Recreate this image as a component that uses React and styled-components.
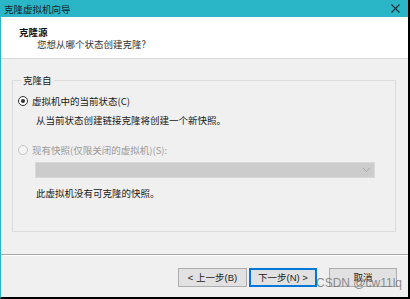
import React from "react";
import styled, { createGlobalStyle } from "styled-components";

const Global = createGlobalStyle`
  html, body { margin: 0; padding: 0; background: #ffffff; }
  body { font-family: "Liberation Sans", "Noto Sans CJK SC", sans-serif; }
  * { box-sizing: border-box; }
`;

const Frame = styled.div`
  position: relative;
  width: 410px;
  height: 299px;
  display: flex;
  flex-direction: column;
  border-left: 1px solid #2bb6c8;
  border-right: 2px solid #000;
  border-bottom: 2px solid #000;
  background: #f0f0f0;
  font-size: 9.5px;
  color: #1a1a1a;
  overflow: hidden;
`;

const TitleBar = styled.div`
  height: 17px;
  flex: none;
  background: #2bb6c8;
  display: flex;
  align-items: center;
  justify-content: space-between;
  padding: 0 8px 0 3px;
  font-family: "Noto Sans CJK SC", sans-serif;
  font-size: 9.5px;
  color: #10262a;
`;

const Header = styled.div`
  height: 42px;
  flex: none;
  background: #ffffff;
  border-bottom: 1px solid #d8d8d8;
  padding: 9px 0 0 18px;
  font-family: "Noto Sans CJK SC", sans-serif;
`;

const HeadTitle = styled.div`
  font-weight: bold;
  line-height: 12px;
  color: #111;
`;

const HeadSub = styled.div`
  line-height: 12px;
  padding-left: 18px;
  color: #333;
`;

const Body = styled.div`
  flex: 1;
  padding: 15px 12px 0 11px;
`;

const Group = styled.fieldset`
  margin: 0;
  padding: 0 0 31px 5px;
  border: 1px solid #dcdcdc;
  min-width: 0;
`;

const Legend = styled.legend`
  margin-left: 3px;
  padding: 0 2px;
  line-height: 12px;
  font-family: "Noto Sans CJK SC", sans-serif;
  color: #1a1a1a;
`;

const Row = styled.div`
  display: flex;
  align-items: center;
  gap: 4px;
  height: 14px;
  margin-top: ${(p) => p.$mt}px;
  font-family: "Noto Sans CJK SC", sans-serif;
  color: ${(p) => (p.$disabled ? "#9a9a9a" : "#1a1a1a")};
`;

const Radio = styled.span`
  width: 10px;
  height: 10px;
  flex: none;
  border-radius: 50%;
  border: 1px solid ${(p) => (p.$disabled ? "#c4c4c4" : "#333")};
  background: ${(p) => (p.$disabled ? "#f4f4f4" : "#fff")};
  display: flex;
  align-items: center;
  justify-content: center;
  &::after {
    content: "";
    width: 4px;
    height: 4px;
    border-radius: 50%;
    background: ${(p) => (p.$checked ? "#333" : "transparent")};
  }
`;

const Note = styled.div`
  margin-top: ${(p) => p.$mt}px;
  margin-left: 18px;
  line-height: 14px;
  font-family: "Noto Sans CJK SC", sans-serif;
  color: #1a1a1a;
`;

const Combo = styled.div`
  margin: 5px 0 0 17px;
  width: 340px;
  height: 16px;
  background: #cccccc;
  border: 1px solid #d9d9d9;
  display: flex;
  align-items: center;
  justify-content: flex-end;
  padding-right: 3px;
`;

const Footer = styled.div`
  height: 43px;
  flex: none;
  border-top: 1px solid #a8a8a8;
  box-shadow: inset 0 1px 0 #ffffff;
  display: flex;
  justify-content: flex-end;
  align-items: flex-start;
  padding: 13px 11px 0 0;
`;

const Button = styled.button`
  width: ${(p) => p.$w || 68}px;
  height: 19px;
  margin-left: ${(p) => p.$ml || 0}px;
  padding: 0;
  background: #e1e1e1;
  border: 1px solid ${(p) => (p.$primary ? "#0078d7" : "#adadad")};
  box-shadow: ${(p) => (p.$primary ? "inset 0 0 0 1px #0078d7" : "none")};
  font-family: "Liberation Sans", "Noto Sans CJK SC", sans-serif;
  font-size: 9.5px;
  color: #1a1a1a;
  line-height: 17px;
`;

const Watermark = styled.div`
  position: absolute;
  left: 315px;
  top: 276px;
  font-family: "Liberation Sans", sans-serif;
  font-size: 12px;
  color: rgba(120, 120, 120, 0.85);
  white-space: nowrap;
  pointer-events: none;
`;

export default function App() {
  return (
    <>
      <Global />
      <Frame>
        <TitleBar>
          <span>克隆虚拟机向导</span>
          <svg width="9" height="9" viewBox="0 0 9 9">
            <path d="M0.5 0.5 L8.5 8.5 M8.5 0.5 L0.5 8.5" stroke="#10303a" strokeWidth="1.1" />
          </svg>
        </TitleBar>
        <Header>
          <HeadTitle>克隆源</HeadTitle>
          <HeadSub>您想从哪个状态创建克隆?</HeadSub>
        </Header>
        <Body>
          <Group>
            <Legend>克隆自</Legend>
            <Row $mt={8}>
              <Radio $checked />
              <span>虚拟机中的当前状态(C)</span>
            </Row>
            <Note $mt={5}>从当前状态创建链接克隆将创建一个新快照。</Note>
            <Row $mt={16} $disabled>
              <Radio $disabled />
              <span>现有快照(仅限关闭的虚拟机)(S):</span>
            </Row>
            <Combo>
              <svg width="9" height="6" viewBox="0 0 9 6">
                <path d="M1 1 L4.5 4.5 L8 1" fill="none" stroke="#a8a8a8" strokeWidth="1" />
              </svg>
            </Combo>
            <Note $mt={8}>此虚拟机没有可克隆的快照。</Note>
          </Group>
        </Body>
        <Footer>
          <Button $w={69}>&lt; 上一步(B)</Button>
          <Button $ml={2} $primary>下一步(N) &gt;</Button>
          <Button $ml={12}>取消</Button>
        </Footer>
        <Watermark>CSDN @cw11lq</Watermark>
      </Frame>
    </>
  );
}
